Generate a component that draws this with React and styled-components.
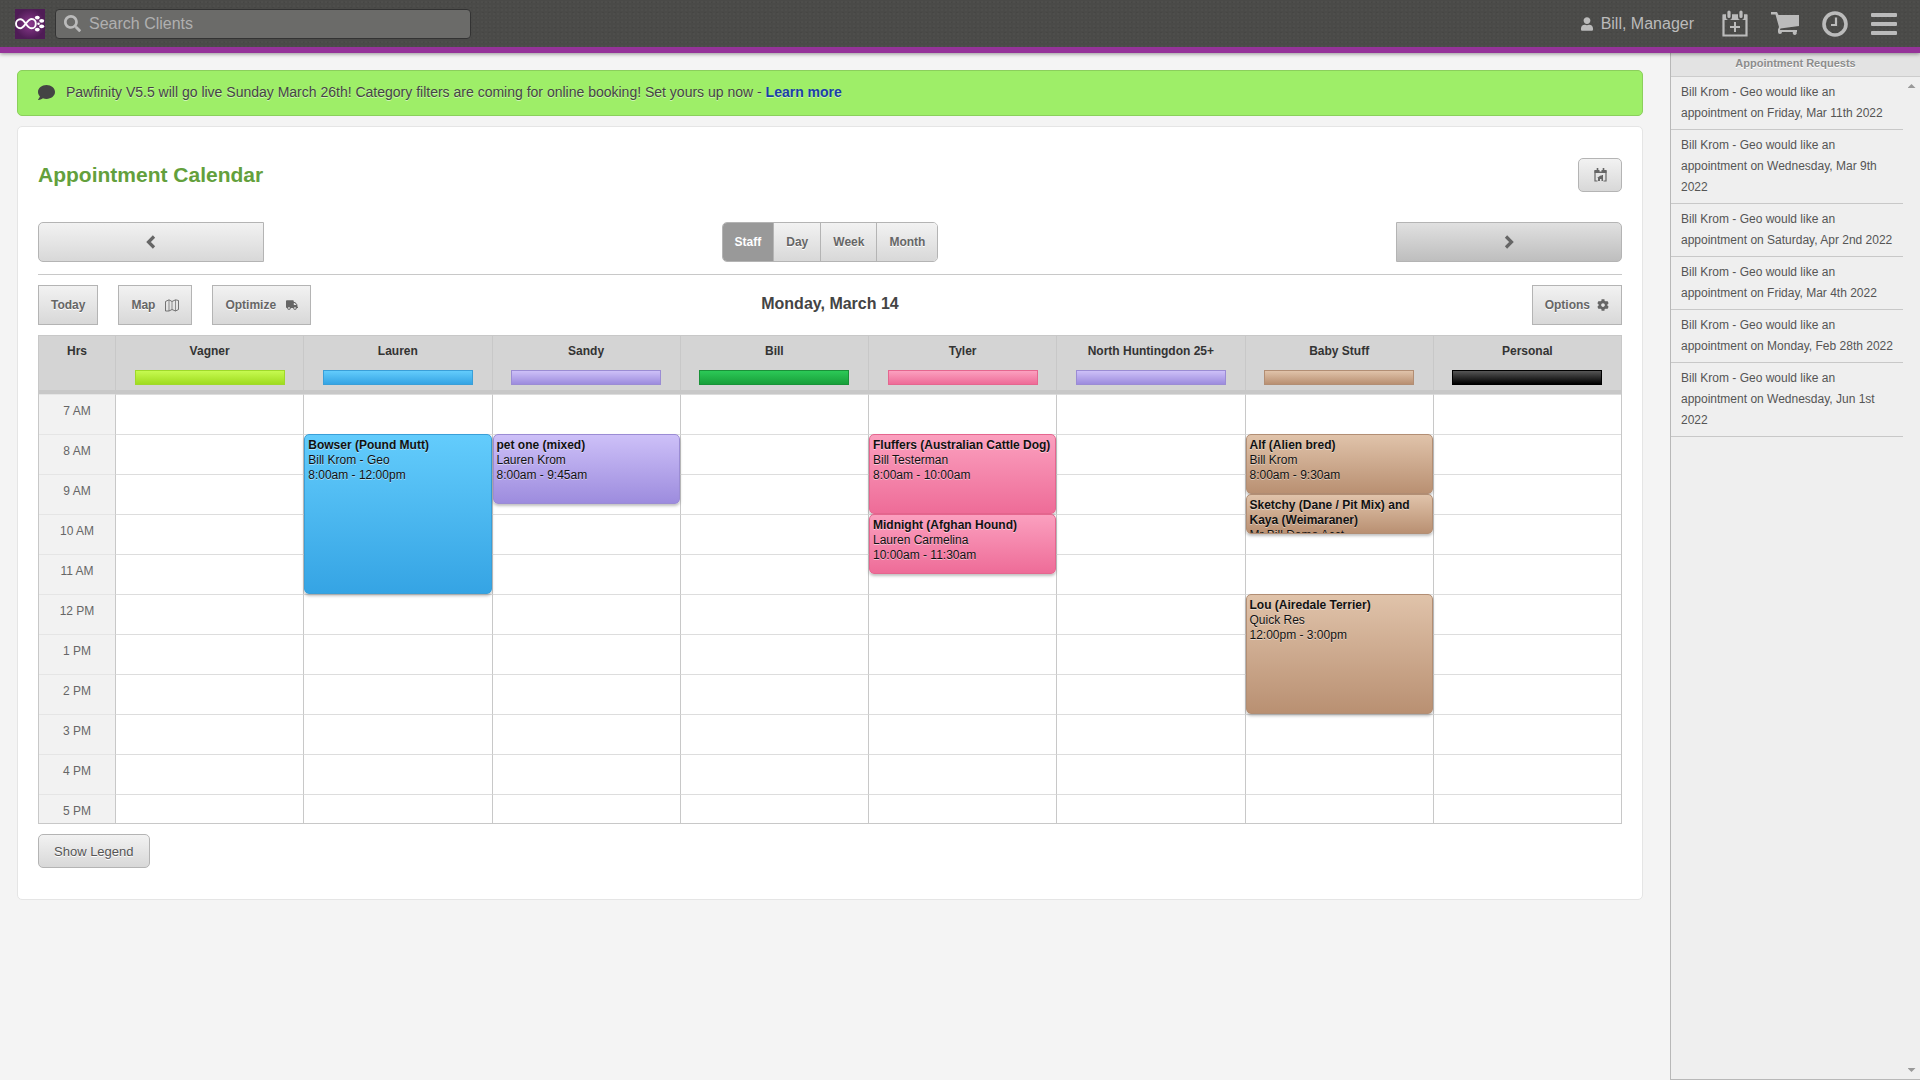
import React from "react";
import styled, { createGlobalStyle } from "styled-components";
import { FaCog, FaComment, FaSearch, FaTruck, FaUser } from "react-icons/fa";

const HOUR_HEIGHT = 40;
const FIRST_HOUR = 7;

const palette = {
  lime: { from: "#c6fa50", to: "#a0dc20", border: "#9fd92a" },
  blue: { from: "#63ccfc", to: "#35a4e4", border: "#3a9fd8" },
  purple: { from: "#cdc0f8", to: "#9d8cde", border: "#9b8cd4" },
  green: { from: "#2cc957", to: "#18a03a", border: "#199238" },
  pink: { from: "#fba0bf", to: "#ee6c98", border: "#e5668f" },
  tan: { from: "#e0c3aa", to: "#b99072", border: "#b28e74" },
  black: { from: "#555555", to: "#000000", border: "#000000" },
};

const staff = [
  { name: "Vagner", color: "lime", events: [] },
  {
    name: "Lauren",
    color: "blue",
    events: [
      { start: 8, end: 12, pet: "Bowser (Pound Mutt)", client: "Bill Krom - Geo", time: "8:00am - 12:00pm" },
    ],
  },
  {
    name: "Sandy",
    color: "purple",
    events: [
      { start: 8, end: 9.75, pet: "pet one (mixed)", client: "Lauren Krom", time: "8:00am - 9:45am" },
    ],
  },
  { name: "Bill", color: "green", events: [] },
  {
    name: "Tyler",
    color: "pink",
    events: [
      { start: 8, end: 10, pet: "Fluffers (Australian Cattle Dog)", client: "Bill Testerman", time: "8:00am - 10:00am" },
      { start: 10, end: 11.5, pet: "Midnight (Afghan Hound)", client: "Lauren Carmelina", time: "10:00am - 11:30am" },
    ],
  },
  { name: "North Huntingdon 25+", color: "purple", events: [] },
  {
    name: "Baby Stuff",
    color: "tan",
    events: [
      { start: 8, end: 9.5, pet: "Alf (Alien bred)", client: "Bill Krom", time: "8:00am - 9:30am" },
      { start: 9.5, end: 10.5, pet: "Sketchy (Dane / Pit Mix) and Kaya (Weimaraner)", client: "Mr Bill Demo Acct" },
      { start: 12, end: 15, pet: "Lou (Airedale Terrier)", client: "Quick Res", time: "12:00pm - 3:00pm" },
    ],
  },
  { name: "Personal", color: "black", events: [] },
];

const hours = Array.from({ length: 11 }, (_, i) => FIRST_HOUR + i);

const requests = [
  "Friday, Mar 11th 2022",
  "Wednesday, Mar 9th 2022",
  "Saturday, Apr 2nd 2022",
  "Friday, Mar 4th 2022",
  "Monday, Feb 28th 2022",
  "Wednesday, Jun 1st 2022",
];

const hourLabel = (hour) => `${hour > 12 ? hour - 12 : hour} ${hour < 12 ? "AM" : "PM"}`;

const Logo = () => (
  <svg width="30" height="30" viewBox="0 0 30 30" aria-hidden="true">
    <defs>
      <radialGradient id="logo-bg">
        <stop offset="0" stopColor="#8c3a8f" />
        <stop offset="1" stopColor="#4f1c56" />
      </radialGradient>
    </defs>
    <rect width="30" height="30" fill="url(#logo-bg)" />
    <path
      d="M11 15C9 12 7.500 10.300 5.300 10.300C2.800 10.300 1 12.400 1 14.800S2.800 19.200 5.300 19.200C9.500 19.200 12 10 16.800 10C19.200 10 20.800 12.200 20.800 14.700S19.200 19.300 16.800 19.300C14.500 19.300 12.700 17.500 11 15Z"
      fill="none"
      stroke="#fff"
      strokeWidth="1.900"
    />
    <ellipse cx="22.300" cy="8.600" rx="2.400" ry="1.900" fill="#fff" />
    <ellipse cx="26.700" cy="11.800" rx="2.500" ry="1.900" fill="#fff" />
    <ellipse cx="26.700" cy="17.300" rx="2.500" ry="1.900" fill="#fff" />
    <ellipse cx="22.300" cy="20.600" rx="2.400" ry="1.900" fill="#fff" />
    <circle cx="23.500" cy="14.700" r="1.300" fill="#fff" />
  </svg>
);

const CalendarPlusIcon = () => (
  <svg width="26" height="27" viewBox="0 0 26 27" fill="none" stroke="currentColor" aria-hidden="true">
    <path d="M1.500 5.500H24.500V25.500H1.500Z" strokeWidth="2.200" />
    <path d="M1 4.500H25V10H1Z" fill="currentColor" stroke="none" />
    <path d="M7 2V7M19 2V7" stroke="#4a4a48" strokeWidth="6" strokeLinecap="round" />
    <path d="M7 2V6.500M19 2V6.500" strokeWidth="3.200" strokeLinecap="round" />
    <path d="M13 12V22M8 17H18" strokeWidth="2" />
  </svg>
);

const CartIcon = () => (
  <svg width="28" height="24" viewBox="0 0 28 24" fill="currentColor" aria-hidden="true">
    <path d="M0 0H6L7.500 3H28V14L9.500 16.500L9 18H26V20H25.500A2 2 0 1 1 22 20H11A2 2 0 1 1 7 20V17.500L8 15L4.500 2.500H0Z" />
  </svg>
);

const ClockIcon = () => (
  <svg width="26" height="26" viewBox="0 0 26 26" fill="none" stroke="currentColor" aria-hidden="true">
    <circle cx="13" cy="13" r="11" strokeWidth="3.600" />
    <path d="M14 6.500V14H9" strokeWidth="2.200" />
  </svg>
);

const MenuIcon = () => (
  <svg width="26" height="22" viewBox="0 0 26 22" fill="currentColor" aria-hidden="true">
    <rect width="26" height="4" rx="1" />
    <rect y="9" width="26" height="4" rx="1" />
    <rect y="18" width="26" height="4" rx="1" />
  </svg>
);

const ChevronIcon = ({ direction }) => (
  <svg width="10" height="14" viewBox="0 0 10 14" fill="none" stroke="currentColor" aria-hidden="true">
    <path d={direction === "left" ? "M8 1.500L2.500 7L8 12.500" : "M2 1.500L7.500 7L2 12.500"} strokeWidth="3.200" />
  </svg>
);

const CalendarHomeIcon = () => (
  <svg width="13" height="14" viewBox="0 0 13 14" fill="none" stroke="currentColor" aria-hidden="true">
    <path d="M1 2.500V13H3.500M9.500 13H12V2.500" strokeWidth="1.200" />
    <path d="M.5 2H12.500V5H.5Z" fill="currentColor" stroke="none" />
    <path d="M3.500 0V3M9.500 0V3" strokeWidth="1.600" />
    <path d="M6.500 2V3.500" stroke="#eee" strokeWidth="2" />
    <path d="M4 13V10H3L6.500 7.500L7.500 8V7H9V13H7.500V11H6V13Z" fill="currentColor" stroke="none" />
  </svg>
);

const MapIcon = () => (
  <svg width="14" height="13" viewBox="0 0 14 13" fill="none" stroke="currentColor" aria-hidden="true">
    <path d="M.5 2.500L4 .8L7 2.500L10.500 .8L13.500 1.500V10.500L10.500 12L7 10.500L4 12L.5 12Z" strokeWidth=".9" />
    <path d="M4 1V12M7 2.500V10.500M10.500 1V12" strokeWidth=".7" />
  </svg>
);

const App = () => {
  return (
    <>
      <GlobalStyle />
      <Page>
        <TopBar>
          <HomeLink href="#home" aria-label="Home">
            <Logo />
          </HomeLink>
          <SearchLabel>
            <FaSearch aria-hidden="true" />
            <SearchInput type="text" placeholder="Search Clients" aria-label="Search Clients" />
          </SearchLabel>
          <UserLink href="#account">
            <FaUser aria-hidden="true" />
            Bill, Manager
          </UserLink>
          <TopActions>
            <IconButton aria-label="New appointment"><CalendarPlusIcon /></IconButton>
            <IconButton aria-label="Cart"><CartIcon /></IconButton>
            <IconButton aria-label="Time clock"><ClockIcon /></IconButton>
            <IconButton aria-label="Menu"><MenuIcon /></IconButton>
          </TopActions>
        </TopBar>

        <Body>
          <Main>
            <Banner>
              <FaComment aria-hidden="true" />
              <p>
                Pawfinity V5.5 will go live Sunday March 26th! Category filters are coming for online
                booking! Set yours up now - <a href="#learn">Learn more</a>
              </p>
            </Banner>

            <Card>
              <CardHeader>
                <Title>Appointment Calendar</Title>
                <SmallButton aria-label="Go to calendar home">
                  <CalendarHomeIcon />
                </SmallButton>
              </CardHeader>

              <NavRow>
                <ArrowButton $side="left" aria-label="Previous day">
                  <ChevronIcon direction="left" />
                </ArrowButton>
                <ViewSwitch>
                  {["Staff", "Day", "Week", "Month"].map((view) => (
                    <ViewButton key={view} $active={view === "Staff"}>
                      {view}
                    </ViewButton>
                  ))}
                </ViewSwitch>
                <ArrowButton $side="right" $pressed aria-label="Next day">
                  <ChevronIcon direction="right" />
                </ArrowButton>
              </NavRow>

              <ToolRow>
                <ToolGroup>
                  <Button>Today</Button>
                  <Button>
                    Map
                    <MapIcon />
                  </Button>
                  <Button>
                    Optimize
                    <FaTruck aria-hidden="true" />
                  </Button>
                </ToolGroup>
                <DateTitle>Monday, March 14</DateTitle>
                <ToolGroup $end>
                  <Button $tight>
                    Options
                    <FaCog aria-hidden="true" />
                  </Button>
                </ToolGroup>
              </ToolRow>

              <Schedule>
                <ScheduleTable>
                  <thead>
                    <tr>
                      <HourHead scope="col">Hrs</HourHead>
                      {staff.map((person) => (
                        <StaffHead key={person.name} scope="col">
                          {person.name}
                          <ColorBar $tone={palette[person.color]} />
                        </StaffHead>
                      ))}
                    </tr>
                  </thead>
                  <tbody>
                    {hours.map((hour) => (
                      <tr key={hour}>
                        <HourCell scope="row">{hourLabel(hour)}</HourCell>
                        {staff.map((person) => (
                          <SlotCell key={person.name}>
                            {person.events
                              .filter((event) => Math.floor(event.start) === hour)
                              .map((event) => (
                                <Appointment
                                  key={event.pet}
                                  $tone={palette[person.color]}
                                  style={{
                                    top: (event.start - hour) * HOUR_HEIGHT - 1,
                                    height: (event.end - event.start) * HOUR_HEIGHT,
                                  }}
                                >
                                  <strong>{event.pet}</strong>
                                  <span>{event.client}</span>
                                  {event.time && <span>{event.time}</span>}
                                </Appointment>
                              ))}
                          </SlotCell>
                        ))}
                      </tr>
                    ))}
                  </tbody>
                </ScheduleTable>
              </Schedule>

              <LegendButton>Show Legend</LegendButton>
            </Card>
          </Main>

          <Sidebar>
            <SidebarTitle>Appointment Requests</SidebarTitle>
            <SidebarScroll>
              <RequestList>
                {requests.map((date) => (
                  <li key={date}>{`Bill Krom - Geo would like an appointment on ${date}`}</li>
                ))}
              </RequestList>
              <ScrollTrack>
                <ScrollArrow aria-label="Scroll up" />
                <ScrollArrow $down aria-label="Scroll down" />
              </ScrollTrack>
            </SidebarScroll>
          </Sidebar>
        </Body>
      </Page>
    </>
  );
};

export default App;

const GlobalStyle = createGlobalStyle`
  * {
    box-sizing: border-box;
  }

  body {
    margin: 0;
    background: #f4f4f4;
    color: #444;
    font-family: "Liberation Sans", Arial, sans-serif;
    font-size: 12px;
  }

  button,
  input {
    font-family: inherit;
  }
`;

const Page = styled.div`
  display: flex;
  flex-direction: column;
  min-height: 100vh;
`;

// Top bar
const TopBar = styled.header`
  display: flex;
  align-items: center;
  height: 53px;
  padding: 0 23px 0 15px;
  border-bottom: 6px solid #953399;
  background-color: #4a4a48;
  background-image: radial-gradient(#4e4e4c 1px, transparent 1px),
    radial-gradient(#464644 1px, transparent 1px);
  background-size: 4px 4px, 6px 5px;
  box-shadow: 0 1px 4px rgba(0, 0, 0, 0.4);
  position: relative;
  z-index: 2;
`;

const HomeLink = styled.a`
  display: flex;
  margin-right: 10px;
`;

const SearchLabel = styled.label`
  display: flex;
  align-items: center;
  gap: 8px;
  width: 416px;
  height: 30px;
  padding: 0 8px;
  border: 1px solid #333;
  border-radius: 4px;
  background: #6b6b69;
  color: #bbb;
  font-size: 17px;
`;

const SearchInput = styled.input`
  flex: 1;
  min-width: 0;
  padding: 0;
  border: 0;
  outline: 0;
  background: none;
  color: #ddd;
  font-size: 16px;

  &::placeholder {
    color: #b0b0b0;
    opacity: 1;
  }
`;

const UserLink = styled.a`
  display: flex;
  align-items: center;
  gap: 8px;
  margin-left: auto;
  color: #bbb;
  font-size: 16px;
  text-decoration: none;

  svg {
    width: 12px;
  }
`;

const TopActions = styled.nav`
  display: flex;
  align-items: center;
  gap: 23px;
  margin-left: 28px;
`;

const IconButton = styled.button`
  display: flex;
  padding: 0;
  border: 0;
  background: none;
  color: #bbb;
`;

// Page layout
const Body = styled.div`
  display: flex;
  flex: 1;
`;

const Main = styled.main`
  flex: 1;
  min-width: 0;
  padding: 17px 27px 17px 17px;
`;

const Banner = styled.div`
  display: flex;
  align-items: center;
  gap: 11px;
  height: 46px;
  padding: 0 20px 2px;
  margin-bottom: 10px;
  border: 1px solid #8bcf5c;
  border-radius: 5px;
  background: #9eee68;
  font-size: 14px;
  text-shadow: 0 1px 0 rgba(255, 255, 255, 0.5);

  svg {
    width: 17px;
    height: 17px;
  }

  p {
    margin: 0;
  }

  a {
    color: #1a3fa8;
    font-weight: bold;
    text-decoration: none;
  }
`;

const Card = styled.section`
  padding: 31px 20px;
  border: 1px solid #e5e5e5;
  border-radius: 5px;
  background: #fff;
`;

const CardHeader = styled.div`
  display: flex;
  align-items: center;
  justify-content: space-between;
`;

const Title = styled.h1`
  margin: 0;
  color: #63a03c;
  font-size: 21px;
`;

// Buttons
const Button = styled.button`
  display: inline-flex;
  align-items: center;
  justify-content: center;
  gap: ${(props) => (props.$tight ? "7px" : "10px")};
  height: 40px;
  padding: 0 12px;
  border: 1px solid #b4b4b4;
  background: linear-gradient(#f2f2f2, #d8d8d8);
  color: #666;
  font-size: 12px;
  font-weight: bold;
  text-shadow: 0 1px 0 #fff;
`;

const SmallButton = styled(Button)`
  width: 44px;
  height: 34px;
  border-radius: 5px;
`;

const LegendButton = styled(Button)`
  height: 34px;
  padding: 0 15px;
  border-radius: 5px;
  color: #555;
  font-size: 13px;
  font-weight: normal;
`;

const ArrowButton = styled(Button)`
  width: 226px;
  border-radius: ${(props) => (props.$side === "left" ? "5px 0 0 5px" : "0 5px 5px 0")};
  background: ${(props) => (props.$pressed ? "linear-gradient(#e0e0e0, #bebebe)" : "")};
`;

const ViewSwitch = styled.div`
  display: flex;
  overflow: hidden;
  border: 1px solid #b4b4b4;
  border-radius: 5px;
`;

const ViewButton = styled(Button)`
  height: 38px;
  border-width: 0 0 0 1px;
  background: ${(props) => (props.$active ? "#999" : "")};
  color: ${(props) => (props.$active ? "#fff" : "#666")};
  text-shadow: ${(props) => (props.$active ? "none" : "0 1px 0 #fff")};

  &:first-child {
    border-left: 0;
  }
`;

const NavRow = styled.div`
  display: flex;
  justify-content: space-between;
  padding: 30px 0 12px;
  border-bottom: 1px solid #c8c8c8;
`;

const ToolRow = styled.div`
  display: grid;
  grid-template-columns: 1fr auto 1fr;
  align-items: center;
  padding: 10px 0;
`;

const ToolGroup = styled.div`
  display: flex;
  gap: 20px;
  justify-content: ${(props) => (props.$end ? "flex-end" : "flex-start")};
`;

const DateTitle = styled.h2`
  margin: 0;
  padding-bottom: 2px;
  font-size: 16px;
`;

// Schedule
const Schedule = styled.div`
  max-height: 489px;
  margin-bottom: 10px;
  overflow-y: auto;
  scrollbar-width: none;
  border: 1px solid #c8c8c8;
`;

const ScheduleTable = styled.table`
  width: 100%;
  table-layout: fixed;
  border-collapse: separate;
  border-spacing: 0;
`;

const StaffHead = styled.th`
  height: 58px;
  padding: 8px 0 0;
  border-left: 1px solid #c8c8c8;
  border-bottom: 4px solid #c8c8c8;
  background: #d4d4d4;
  color: #333;
  font-size: 12px;
  line-height: 14px;
  vertical-align: top;
`;

const HourHead = styled(StaffHead)`
  width: 76px;
  border-left: 0;
`;

const ColorBar = styled.div`
  width: 80%;
  height: 15px;
  margin: 12px auto 0;
  border: 1px solid ${(props) => props.$tone.border};
  background: linear-gradient(${(props) => props.$tone.from}, ${(props) => props.$tone.to});
`;

const SlotCell = styled.td`
  position: relative;
  height: ${HOUR_HEIGHT}px;
  padding: 0;
  border-top: 1px solid #ddd;
  border-left: 1px solid #c8c8c8;
`;

const HourCell = styled.th`
  padding: 9px 0 0;
  border-top: 1px solid #e5e5e5;
  background: #f2f2f2;
  color: #666;
  font-weight: normal;
  line-height: 14px;
  vertical-align: top;
`;

const Appointment = styled.div`
  position: absolute;
  left: 0;
  right: 0;
  z-index: 1;
  overflow: hidden;
  padding: 3px;
  border: 1px solid ${(props) => props.$tone.border};
  border-radius: 5px;
  background: linear-gradient(${(props) => props.$tone.from}, ${(props) => props.$tone.to});
  box-shadow: 0 2px 3px rgba(0, 0, 0, 0.25);
  color: #111;
  line-height: 15px;
  text-shadow: 0 1px 0 rgba(255, 255, 255, 0.5);

  strong,
  span {
    display: block;
  }
`;

// Sidebar
const Sidebar = styled.aside`
  display: flex;
  flex-direction: column;
  width: 250px;
  border-left: 1px solid #b8b8b8;
  border-bottom: 1px solid #b8b8b8;
  background: #efefef;
`;

const SidebarTitle = styled.h2`
  height: 24px;
  margin: 0;
  border-bottom: 1px solid #ccc;
  background: #e3e3e3;
  color: #8c8c8c;
  font-size: 11px;
  line-height: 20px;
  text-align: center;
  text-shadow: 0 1px 0 #fff;
`;

const SidebarScroll = styled.div`
  display: flex;
  flex: 1;
`;

const RequestList = styled.ul`
  flex: 1;
  margin: 0;
  padding: 0;
  list-style: none;

  li {
    padding: 5px 5px 5px 10px;
    border-bottom: 1px solid #c8c8c8;
    color: #555;
    line-height: 21px;
  }
`;

const ScrollTrack = styled.div`
  display: flex;
  flex-direction: column;
  align-items: center;
  justify-content: space-between;
  width: 17px;
  padding: 7px 0;
`;

const ScrollArrow = styled.button`
  width: 8px;
  height: 4px;
  padding: 0;
  border: 0;
  background: #999;
  clip-path: ${(props) =>
    props.$down ? "polygon(0 0, 100% 0, 50% 100%)" : "polygon(50% 0, 100% 100%, 0 100%)"};
`;
